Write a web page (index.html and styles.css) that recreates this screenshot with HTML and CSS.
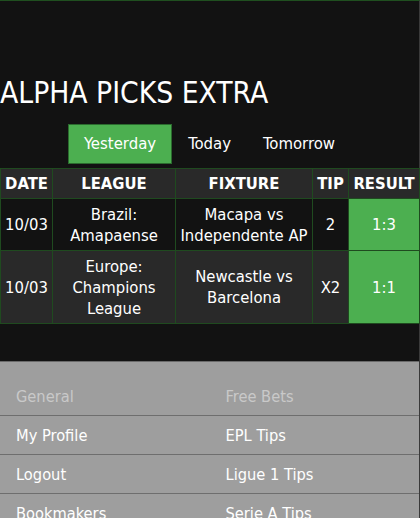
FILE: index.html
```html
<!DOCTYPE html>
<html lang="en">
<head>
<meta charset="utf-8">
<title>Alpha Picks Extra</title>
<link rel="stylesheet" href="styles.css">
</head>
<body>
<div class="page">
  <header class="top">
    <h1 class="title">ALPHA PICKS EXTRA</h1>
    <nav class="tabs">
      <a class="tab active" href="#">Yesterday</a>
      <a class="tab" href="#">Today</a>
      <a class="tab" href="#">Tomorrow</a>
    </nav>
  </header>

  <table class="picks">
    <colgroup>
      <col class="c-date"><col class="c-league"><col class="c-fixture"><col class="c-tip"><col class="c-result">
    </colgroup>
    <thead>
      <tr><th>DATE</th><th>LEAGUE</th><th>FIXTURE</th><th>TIP</th><th>RESULT</th></tr>
    </thead>
    <tbody>
      <tr class="odd">
        <td>10/03</td><td>Brazil: Amapaense</td><td>Macapa vs Independente AP</td><td>2</td><td class="win">1:3</td>
      </tr>
      <tr class="even">
        <td>10/03</td><td>Europe: Champions League</td><td>Newcastle vs Barcelona</td><td>X2</td><td class="win">1:1</td>
      </tr>
    </tbody>
  </table>

  <footer class="foot">
    <ul class="col">
      <li class="head">General</li>
      <li><a href="#">My Profile</a></li>
      <li><a href="#">Logout</a></li>
      <li><a href="#">Bookmakers</a></li>
      <li><a href="#">Contact</a></li>
    </ul>
    <ul class="col">
      <li class="head">Free Bets</li>
      <li><a href="#">EPL Tips</a></li>
      <li><a href="#">Ligue 1 Tips</a></li>
      <li><a href="#">Serie A Tips</a></li>
      <li><a href="#">La Liga Tips</a></li>
    </ul>
  </footer>
</div>
</body>
</html>
```

FILE: styles.css
```css
html, body {
  margin: 0;
  padding: 0;
  background: #121212;
}

body {
  font-family: "DejaVu Sans Condensed", "DejaVu Sans", sans-serif;
  font-stretch: semi-condensed;
  color: #ffffff;
  font-size: 16px;
}

.page {
  border-top: 1px solid #1f4f1f;
  border-right: 1px solid #3a3a3a;
  min-height: 517px;
}

.top {
  padding-top: 75px;
}

.title {
  margin: 0;
  font-size: 29.7px;
  line-height: 34px;
  font-weight: normal;
  color: #ffffff;
}

.tabs {
  display: flex;
  justify-content: center;
  margin-top: 14px;
}

.tab {
  display: block;
  padding: 9px 15px;
  line-height: 20px;
  font-size: 16.6px;
  color: #ffffff;
  text-decoration: none;
  border: 1px solid transparent;
}

.tab.active {
  background: #4caf50;
  border-color: #2b6b2e;
}

.picks {
  margin-top: 4px;
  width: 100%;
  table-layout: fixed;
  border-collapse: collapse;
  border: 1px solid #1f4a1f;
}

.c-date { width: 52px; }
.c-league { width: 123px; }
.c-fixture { width: 137px; }
.c-tip { width: 36px; }
.c-result { width: 71px; }

.picks th,
.picks td {
  border: 1px solid #1f4a1f;
  text-align: center;
  line-height: 21px;
  font-size: 16.5px;
  color: #ffffff;
}

.picks th {
  background: #292929;
  font-weight: bold;
  padding: 4px 1px;
}

.picks td {
  padding: 4.5px 2px;
}

.picks tr.odd td { background: #121212; }
.picks tr.even td { background: #292929; }
.picks td.win { background: #4caf50 !important; }

.foot {
  margin-top: 37px;
  background: #9e9e9e;
  border-top: 1px solid #6a6a6a;
  padding-top: 15px;
  display: grid;
  grid-template-columns: 1fr 1fr;
}

.col {
  list-style: none;
  margin: 0;
  padding: 0;
}

.col li {
  padding: 10px 16px 8px;
  line-height: 20px;
  font-size: 16.3px;
  border-bottom: 1px solid #6e6e6e;
}

.col li.head {
  color: #c9c9c9;
}

.col li a {
  color: #ffffff;
  text-decoration: none;
}
```
